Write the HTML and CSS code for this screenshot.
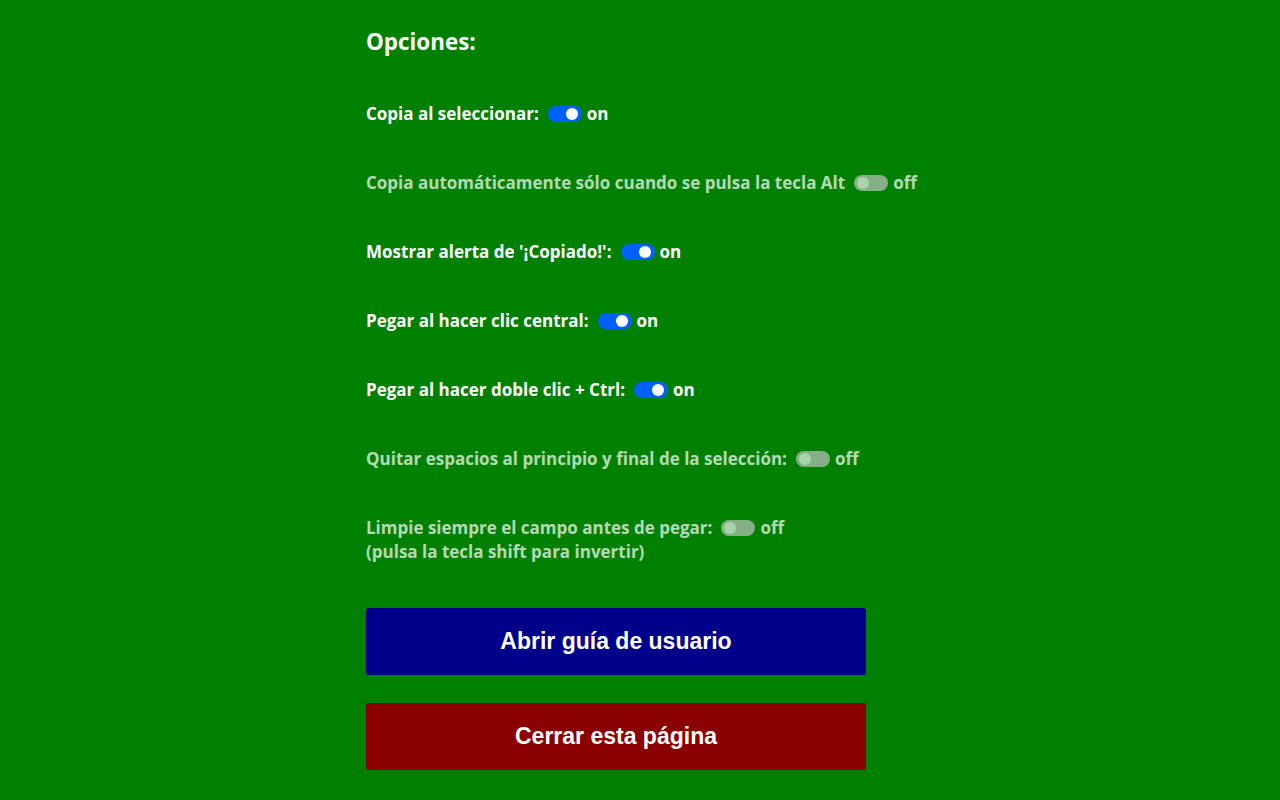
FILE: index.html
```html
<!DOCTYPE html>
<html lang="es">
<head>
<meta charset="utf-8">
<title>Opciones</title>
<link rel="stylesheet" href="styles.css">
</head>
<body>
<main class="page">
  <h1 class="title">Opciones:</h1>
  <div class="options">
    <div class="opt"><span class="label">Copia al seleccionar:</span><span class="switch on"><span class="knob"></span></span><span class="state">on</span></div>
    <div class="opt off"><span class="label">Copia automáticamente sólo cuando se pulsa la tecla Alt</span><span class="switch"><span class="knob"></span></span><span class="state">off</span></div>
    <div class="opt"><span class="label">Mostrar alerta de '¡Copiado!':</span><span class="switch on"><span class="knob"></span></span><span class="state">on</span></div>
    <div class="opt"><span class="label">Pegar al hacer clic central:</span><span class="switch on"><span class="knob"></span></span><span class="state">on</span></div>
    <div class="opt"><span class="label">Pegar al hacer doble clic + Ctrl:</span><span class="switch on"><span class="knob"></span></span><span class="state">on</span></div>
    <div class="opt off"><span class="label">Quitar espacios al principio y final de la selección:</span><span class="switch"><span class="knob"></span></span><span class="state">off</span></div>
    <div class="opt off multi"><div class="line"><span class="label">Limpie siempre el campo antes de pegar:</span><span class="switch"><span class="knob"></span></span><span class="state">off</span></div><div class="note">(pulsa la tecla shift para invertir)</div></div>
  </div>
  <div class="buttons">
    <button class="btn guide">Abrir guía de usuario</button>
    <button class="btn close">Cerrar esta página</button>
  </div>
</main>
</body>
</html>
```

FILE: styles.css
```css
html, body {
  margin: 0;
  padding: 0;
  background: #008000;
}
body {
  font-family: "Open Sans", "Noto Sans", sans-serif;
  color: #ffffff;
}
.page {
  width: 548px;
  margin: 0 auto;
  padding-top: 26px;
}
.title {
  margin: 0;
  font-size: 22.4px;
  font-weight: 700;
  line-height: 32px;
}
.options {
  display: flex;
  flex-direction: column;
  gap: 45px;
  margin-top: 44px;
}
.opt, .line {
  display: flex;
  align-items: center;
  font-size: 17px;
  font-weight: 700;
  line-height: 24px;
  white-space: nowrap;
}
.opt.multi {
  flex-direction: column;
  align-items: flex-start;
}
.off {
  opacity: 0.7;
}
.switch {
  position: relative;
  width: 34px;
  height: 16px;
  border-radius: 8px;
  background: #c1c4c1;
  margin: 0 5px 0 9px;
  flex: none;
}
.switch .knob {
  position: absolute;
  top: 2px;
  left: 3px;
  width: 12px;
  height: 12px;
  border-radius: 50%;
  background: #f2f8f2;
}
.switch.on {
  background: #0061fe;
}
.switch.on .knob {
  left: auto;
  right: 4px;
  background: #ffffff;
}
.buttons {
  display: flex;
  flex-direction: column;
  gap: 28px;
  margin-top: 44px;
}
.btn {
  width: 500px;
  height: 67px;
  border: none;
  border-radius: 3px;
  color: #ffffff;
  font-family: "Liberation Sans", Arial, sans-serif;
  font-size: 23px;
  font-weight: 700;
  cursor: pointer;
}
.guide { background: #00008b; }
.close { background: #8b0000; }
```
